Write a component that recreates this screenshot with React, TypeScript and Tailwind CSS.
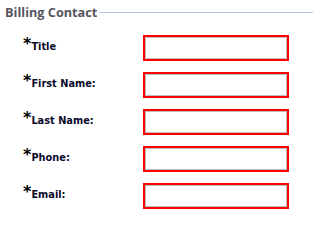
import React from "react";

const fields = ["Title", "First Name:", "Last Name:", "Phone:", "Email:"];

export default function App() {
  return (
    <div className="w-[313px] h-[213px] bg-white overflow-hidden font-['DejaVu_Sans',sans-serif]">
      <div className="flex items-start pl-[5px] pt-[5px]">
        <span className="text-[12.7px] font-bold text-[#555560] leading-[15px] font-['Open_Sans',sans-serif]">
          Billing Contact
        </span>
        <div className="flex-1 border-t border-[#b7c6e6] mt-[7px] ml-[2px]" />
      </div>
      <div className="flex flex-col gap-[11px] mt-[15px]">
        {fields.map((f) => (
          <div key={f} className="flex items-start h-[26px]">
            <div className="w-[143px] pl-[23px] pt-[1px] flex items-start">
              <span className="text-[16px] font-bold leading-[16px] text-black">*</span>
              <span className="text-[9.8px] font-bold leading-[12px] text-[#0a0a2a] mt-[5px]">{f}</span>
            </div>
            <div className="w-[146px] h-[26px] border-2 border-[#ff0000]">
              <input className="block w-full h-full border border-[#bdbdbd] bg-white outline-none" />
            </div>
          </div>
        ))}
      </div>
    </div>
  );
}
